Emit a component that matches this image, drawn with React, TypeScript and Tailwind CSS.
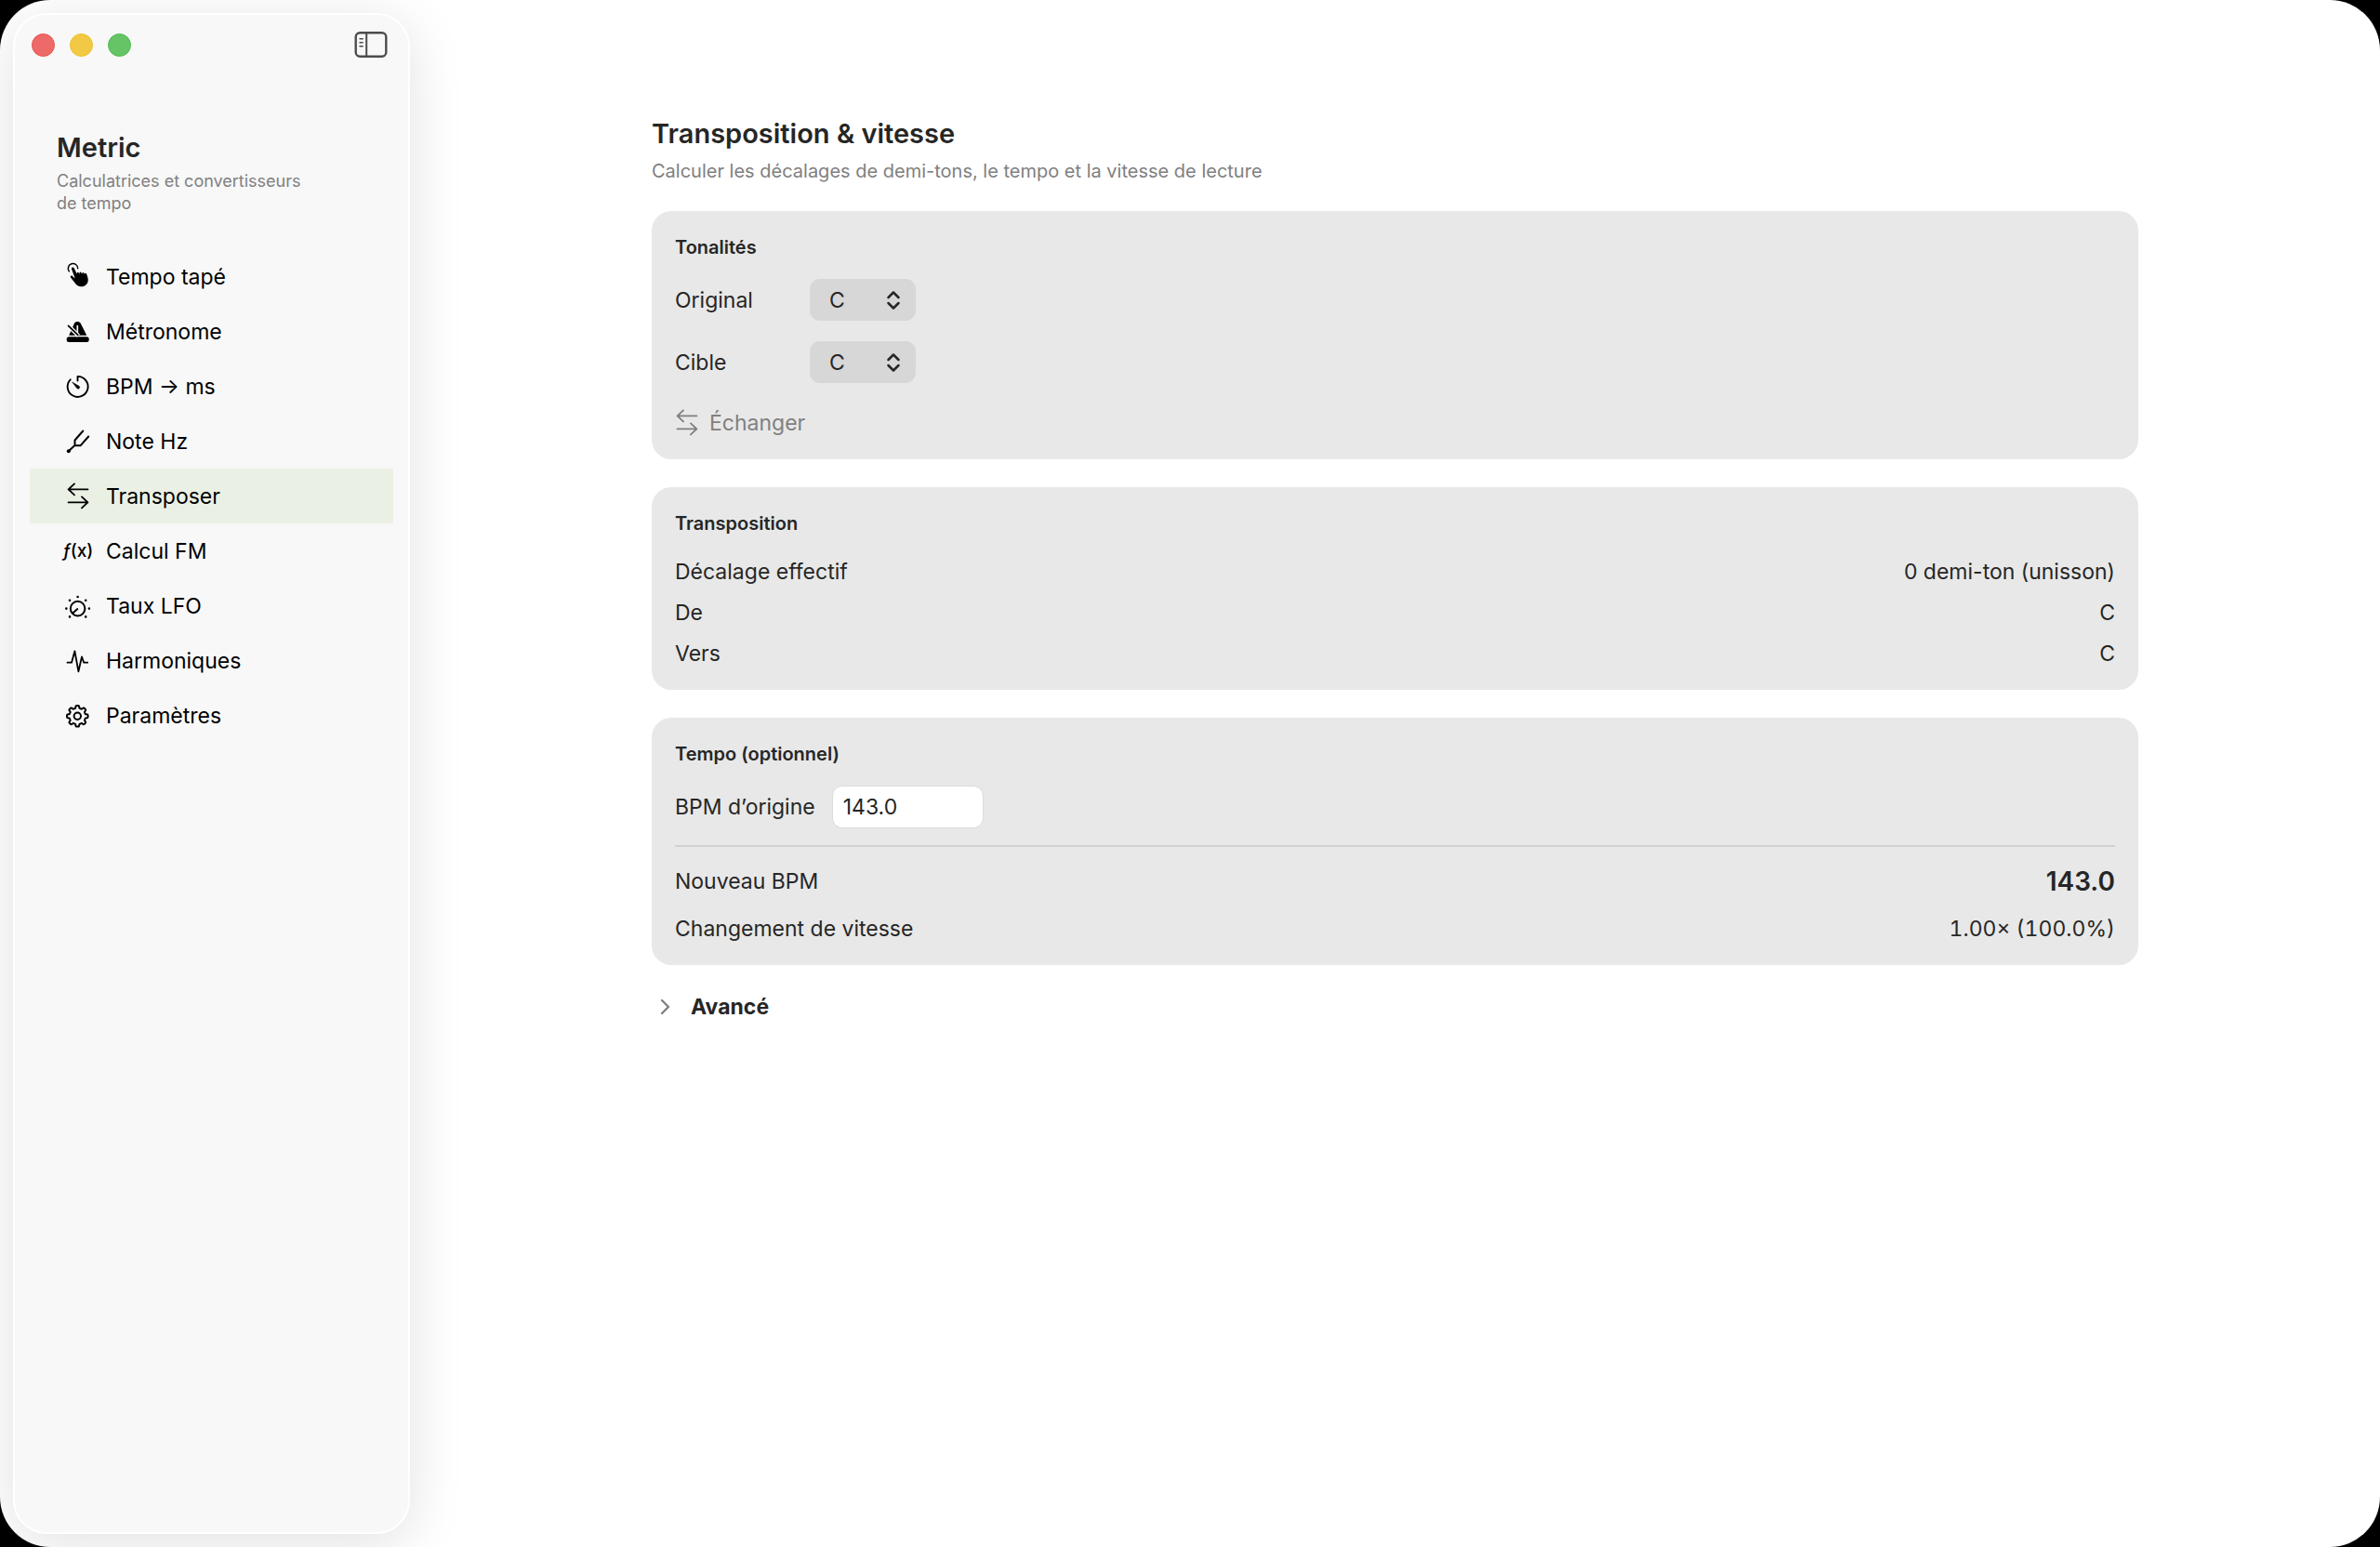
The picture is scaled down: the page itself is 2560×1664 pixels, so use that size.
import React, { useState } from "react";

const KEYS = ["C", "C♯", "D", "D♯", "E", "F", "F♯", "G", "G♯", "A", "A♯", "B"];

// outline of an eight-toothed cog
const cog = (cx: number, cy: number) => {
  const points: string[] = [];
  for (let i = 0; i < 160; i++) {
    const a = (i / 160) * Math.PI * 2;
    const r = 10 + 1.3 * Math.tanh(3 * Math.cos(8 * a));
    points.push(
      `${(cx + r * Math.sin(a)).toFixed(2)} ${(cy - r * Math.cos(a)).toFixed(2)}`,
    );
  }
  return `M${points.join("L")}Z`;
};

const Glyph = ({ children }: { children: React.ReactNode }) => (
  <svg
    viewBox="0 0 34 31"
    className="h-[31px] w-[34px] shrink-0"
    fill="none"
    stroke="currentColor"
    strokeWidth="2"
    strokeLinecap="round"
    strokeLinejoin="round"
    aria-hidden="true"
  >
    {children}
  </svg>
);

const TapIcon = () => (
  <Glyph>
    <path d="M8.4 9.9A5.2 5.2 0 1 1 17.7 6.8" strokeWidth="1.5" />
    <path
      d="M11 7.4a1.4 1.4 0 0 1 2.7-.9l3.1 6.3.1-1.3a.9.9 0 0 1 1.7-.3l.7 1.5.4-1.6a.9.9 0 0 1 1.7 0l.7 1.7.5-1.3a.9.9 0 0 1 1.7 0l.6 1.6.4-1a.9.9 0 0 1 1.6.2c1.5 3.4 2.2 5.8 1.7 8.4-.7 3.4-3.8 5.6-7.3 5.6-3.2 0-5.2-1.5-7-4.2l-4.3-5.6c-.9-1.4.7-2.6 1.9-1.5l2.9 2.6z"
      fill="currentColor"
      stroke="none"
    />
  </Glyph>
);

const MetronomeIcon = () => (
  <Glyph>
    <rect x="5.7" y="21.3" width="24" height="5.7" rx="2.5" fill="currentColor" stroke="none" />
    <path
      d="M14 6.8c.9-2.5 5.7-2.5 6.7 0l6.6 13H8.2z"
      fill="currentColor"
      stroke="none"
    />
    <path d="M17.3 9.5v7.5" stroke="#f8f8f8" strokeWidth="1.7" />
    <path d="M6.5 8.4l12 11.8" stroke="#f8f8f8" strokeWidth="4.4" strokeLinecap="butt" />
    <path d="M7.5 9.3l10.3 10" strokeWidth="1.7" />
  </Glyph>
);

const TimerIcon = () => (
  <Glyph>
    <path d="M17.5 9.5V4.9A11 11 0 1 1 9.7 8.3" strokeWidth="1.9" />
    <path
      d="M12 11.2l7.3 4.4a1.6 1.6 0 0 1-2.3 2.2z"
      fill="currentColor"
      strokeWidth="0.6"
    />
  </Glyph>
);

const ForkIcon = () => (
  <Glyph>
    <circle cx="7.8" cy="26.2" r="2" fill="currentColor" stroke="none" />
    <path d="M7.8 26.2l6.7-6.2v-5.5L23.3 4.5M14.5 20.3h6L29.2 10.5" />
  </Glyph>
);

const SwapIcon = () => (
  <Glyph>
    <path d="M28.4 8.4H7.6M14 2.4L7.6 8.4 14 14.4" strokeWidth="1.9" />
    <path d="M7.6 22.4h20.8M22 16.4l6.4 6-6.4 6" strokeWidth="1.9" />
  </Glyph>
);

const FunctionIcon = () => (
  <span className="flex h-[31px] w-[34px] shrink-0 items-center justify-center pl-0.5 text-[19px] leading-none font-medium">
    <i>ƒ</i>(x)
  </span>
);

const DialIcon = () => (
  <Glyph>
    <circle cx="17.6" cy="18.6" r="7.8" />
    <path d="M12.3 23.4l5-4.3" />
    <path
      d="M17.6 6h0M9 9.7h0M26.2 9.7h0M5.3 18.6h0M29.9 18.6h0M9 27.4h0M26.2 27.4h0"
      strokeWidth="2.6"
    />
  </Glyph>
);

const PulseIcon = () => (
  <Glyph>
    <path
      d="M6.5 17.7h4.5L14.4 5.3l4 22L22 11.5l2.2 6.2h4"
      strokeWidth="1.8"
    />
  </Glyph>
);

const CogIcon = () => (
  <Glyph>
    <path d={cog(17.3, 16.3)} />
    <circle cx="17.3" cy="16.3" r="3.7" />
  </Glyph>
);

const SidebarIcon = () => (
  <svg
    viewBox="0 0 36 30"
    className="h-[30px] w-9"
    fill="none"
    stroke="currentColor"
    strokeLinecap="round"
    aria-hidden="true"
  >
    <rect x="1.7" y="2.2" width="32.6" height="25.6" rx="4.5" strokeWidth="2.4" />
    <path d="M13.2 2.5v25" strokeWidth="2" />
    <path d="M6 8.7h3.2M6 12.7h3.2M6 16.7h3.2" strokeWidth="1.5" />
  </svg>
);

const NAV = [
  { label: "Tempo tapé", icon: TapIcon },
  { label: "Métronome", icon: MetronomeIcon },
  { label: "BPM → ms", icon: TimerIcon },
  { label: "Note Hz", icon: ForkIcon },
  { label: "Transposer", icon: SwapIcon },
  { label: "Calcul FM", icon: FunctionIcon },
  { label: "Taux LFO", icon: DialIcon },
  { label: "Harmoniques", icon: PulseIcon },
  { label: "Paramètres", icon: CogIcon },
];

const Sidebar = () => {
  return (
    <aside className="my-[14px] ml-[14px] w-[427px] shrink-0 rounded-[36px] border-2 border-white bg-[#f8f8f8] px-4 shadow-[0_10px_60px_rgba(0,0,0,0.12)]">
      <div className="flex items-center justify-between pt-[17px] pr-1.5 pl-0.5">
        <div className="flex gap-4">
          <button aria-label="Fermer" className="size-[25px] rounded-full border border-[#e9504e] bg-[#ed6a68]" />
          <button aria-label="Réduire" className="size-[25px] rounded-full border border-[#edc02c] bg-[#f1c944]" />
          <button aria-label="Agrandir" className="size-[25px] rounded-full border border-[#50ba50] bg-[#66c466]" />
        </div>
        <button aria-label="Barre latérale" className="text-[#4c4c4c]">
          <SidebarIcon />
        </button>
      </div>
      <div className="px-[29px] pt-[78px]">
        <h1 className="text-[29px] leading-9 font-semibold text-[#262626]">Metric</h1>
        <p className="mt-1.5 w-[280px] text-[18px] leading-6 text-[#808080]">
          Calculatrices et convertisseurs de tempo
        </p>
      </div>
      <nav className="mt-[37px]">
        {NAV.map(({ label, icon: Icon }) => (
          <a
            key={label}
            href="#"
            className={`flex h-[59px] items-center gap-3.5 pl-[34px] text-[23px] text-black ${
              label === "Transposer" ? "bg-[#ebf0e5]" : ""
            }`}
          >
            <Icon />
            {label}
          </a>
        ))}
      </nav>
    </aside>
  );
};

const Card = ({ title, children }: { title: string; children: React.ReactNode }) => (
  <section className="rounded-[21px] bg-[#e8e8e8] px-[25px] pt-[27px] pb-6">
    <h3 className="text-[20px] leading-6 font-semibold">{title}</h3>
    {children}
  </section>
);

type KeySelectProps = {
  id: string;
  label: string;
  value: string;
  onChange: (value: string) => void;
};

const KeySelect = ({ id, label, value, onChange }: KeySelectProps) => (
  <div className="mt-[22px] flex items-center">
    <label htmlFor={id} className="w-[145px]">
      {label}
    </label>
    <div className="relative">
      <select
        id={id}
        value={value}
        onChange={(e) => onChange(e.target.value)}
        className="h-[45px] w-[114px] appearance-none rounded-[11px] bg-[#d7d7d7] pl-[21px]"
      >
        {KEYS.map((key) => (
          <option key={key}>{key}</option>
        ))}
      </select>
      <svg
        viewBox="0 0 16 22"
        className="pointer-events-none absolute top-3 right-4 h-[22px] w-4"
        fill="none"
        stroke="currentColor"
        strokeWidth="2.5"
        strokeLinecap="round"
        strokeLinejoin="round"
        aria-hidden="true"
      >
        <path d="M2.5 8L8 2.5 13.5 8M2.5 14L8 19.5 13.5 14" />
      </svg>
    </div>
  </div>
);

const Row = ({ label, children }: { label: string; children: React.ReactNode }) => (
  <div className="flex items-center justify-between leading-[30px]">
    <span>{label}</span>
    {children}
  </div>
);

const App = () => {
  const [from, setFrom] = useState("C");
  const [to, setTo] = useState("C");
  const [bpm, setBpm] = useState("143.0");

  const swap = () => {
    setFrom(to);
    setTo(from);
  };

  return (
    <div className="min-h-screen bg-black">
      <div className="flex min-h-screen overflow-hidden rounded-[54px] bg-white font-['Inter','Liberation_Sans',sans-serif] text-[23px] leading-[30px] text-[#262626]">
        <Sidebar />
        <main className="flex flex-1 justify-center px-10 pt-[126px] pb-10">
          <div className="w-full max-w-[1599px]">
            <h2 className="text-[29px] leading-9 font-semibold">Transposition &amp; vitesse</h2>
            <p className="mt-2.5 text-[20px] leading-6 text-[#808080]">
              Calculer les décalages de demi-tons, le tempo et la vitesse de lecture
            </p>
            <div className="mt-[31px] flex flex-col gap-[30px]">
              <Card title="Tonalités">
                <KeySelect id="original" label="Original" value={from} onChange={setFrom} />
                <KeySelect id="cible" label="Cible" value={to} onChange={setTo} />
                <button onClick={swap} className="mt-[27px] flex items-center gap-2 text-[#808080]">
                  <span className="-ml-[5px] flex">
                    <SwapIcon />
                  </span>
                  Échanger
                </button>
              </Card>
              <Card title="Transposition">
                <div className="mt-[25px] flex flex-col gap-3.5">
                  <Row label="Décalage effectif">
                    <span>0 demi-ton (unisson)</span>
                  </Row>
                  <Row label="De">
                    <span>{from}</span>
                  </Row>
                  <Row label="Vers">
                    <span>{to}</span>
                  </Row>
                </div>
              </Card>
              <Card title="Tempo (optionnel)">
                <div className="mt-[22px] flex items-center gap-[18px]">
                  <label htmlFor="bpm">BPM d’origine</label>
                  <input
                    id="bpm"
                    value={bpm}
                    onChange={(e) => setBpm(e.target.value)}
                    className="h-[46px] w-[163px] rounded-[11px] border border-[#dcdcdc] bg-white px-[11px]"
                  />
                </div>
                <hr className="mt-[18px] border-t-2 border-[#d0d0d0]" />
                <div className="mt-[22px] flex flex-col gap-[21px]">
                  <Row label="Nouveau BPM">
                    <span className="text-[28px] font-semibold">143.0</span>
                  </Row>
                  <Row label="Changement de vitesse">
                    <span className="tabular-nums">1.00× (100.0%)</span>
                  </Row>
                </div>
              </Card>
              <button className="flex items-center gap-[22px] self-start pl-[9px] font-bold">
                <svg
                  viewBox="0 0 11 18"
                  className="h-[18px] w-[11px]"
                  fill="none"
                  stroke="#808080"
                  strokeWidth="2.4"
                  strokeLinecap="round"
                  strokeLinejoin="round"
                  aria-hidden="true"
                >
                  <path d="M2 2l7 7-7 7" />
                </svg>
                Avancé
              </button>
            </div>
          </div>
        </main>
      </div>
    </div>
  );
};

export default App;
